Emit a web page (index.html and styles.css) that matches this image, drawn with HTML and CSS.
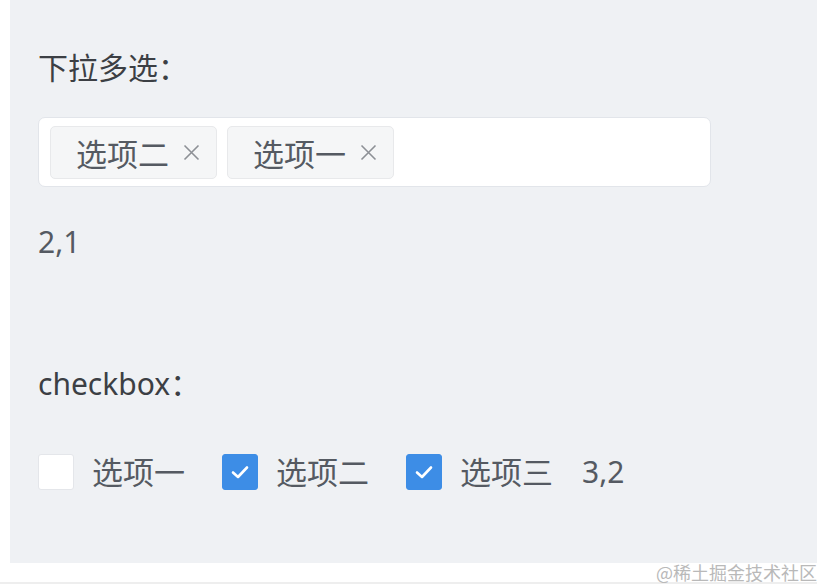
FILE: index.html
```html
<!DOCTYPE html>
<html lang="zh">
<head>
  <meta charset="UTF-8">
  <meta name="viewport" content="width=device-width, initial-scale=1.0">
  <title>下拉多选</title>
  <link rel="stylesheet" href="styles.css">
</head>
<body>

  <div class="panel">
    <div class="titulo">下拉多选：</div>
    <div class="select">
      <span class="tag">选项二<svg class="tag-close" width="17" height="17" viewBox="0 0 17 17"><path d="M1.5 1.5 L15.5 15.5 M15.5 1.5 L1.5 15.5" stroke="#8d9096" stroke-width="1.6" fill="none"/></svg></span>
      <span class="tag">选项一<svg class="tag-close" width="17" height="17" viewBox="0 0 17 17"><path d="M1.5 1.5 L15.5 15.5 M15.5 1.5 L1.5 15.5" stroke="#8d9096" stroke-width="1.6" fill="none"/></svg></span>
    </div>
    <div class="valor">2,1</div>

    <div class="titulo checkbox-titulo">checkbox：</div>
    <div class="checks">
      <label class="check"><span class="box"></span>选项一</label>
      <label class="check"><span class="box marcado"><svg width="24" height="24" viewBox="0 0 24 24"><path d="M5 12.5 L10 17 L19 7.5" fill="none" stroke="#fff" stroke-width="2.6" stroke-linecap="round" stroke-linejoin="round"/></svg></span>选项二</label>
      <label class="check"><span class="box marcado"><svg width="24" height="24" viewBox="0 0 24 24"><path d="M5 12.5 L10 17 L19 7.5" fill="none" stroke="#fff" stroke-width="2.6" stroke-linecap="round" stroke-linejoin="round"/></svg></span>选项三</label>
      <span class="valor-check">3,2</span>
    </div>
  </div>

  <div class="pie">@稀土掘金技术社区</div>

</body>
</html>
```

FILE: styles.css
```css
/* pagina */
body {
  font-family: "Noto Sans", "Noto Sans CJK SC", sans-serif;
  background-color: #fff;
  color: #555a62;
  margin: 0;
  padding: 0;
}

.panel {
  margin-left: 10px;
  width: 807px;
  height: 563px;
  box-sizing: border-box;
  background-color: #eff1f4;
  padding: 48px 0 0 28px;
}

.titulo {
  font-size: 30px;
  line-height: 40px;
  color: #3c3f44;
}

.select {
  margin-top: 29px;
  width: 673px;
  height: 70px;
  box-sizing: border-box;
  background-color: #fff;
  border: 1px solid #e2e5ea;
  border-radius: 7px;
  padding: 8px 11px;
  display: flex;
  gap: 10px;
}

.tag {
  display: inline-flex;
  align-items: center;
  height: 53px;
  box-sizing: border-box;
  padding: 0 16px 0 25px;
  background-color: #f5f6f7;
  border: 1px solid #e8e9eb;
  border-radius: 5px;
  font-size: 31px;
  color: #555a62;
}

.tag-close {
  margin-left: 14px;
}

.valor {
  margin-top: 35px;
  font-size: 30px;
  line-height: 40px;
}

.checkbox-titulo {
  margin-top: 102px;
}

.checks {
  margin-top: 50px;
  display: flex;
  align-items: center;
  font-size: 31px;
  line-height: 36px;
}

.check {
  display: flex;
  align-items: center;
  margin-right: 37px;
}

.box {
  width: 36px;
  height: 36px;
  box-sizing: border-box;
  background-color: #fff;
  border: 1px solid #e4e6ea;
  border-radius: 3px;
  margin-right: 18px;
  display: flex;
  align-items: center;
  justify-content: center;
}

.marcado {
  background-color: #3d8de6;
  border-color: #3d8de6;
}

.valor-check {
  margin-left: -8px;
  font-size: 30px;
}

.pie {
  width: 817px;
  height: 19px;
  border-bottom: 2px solid #eeeeee;
  text-align: right;
  font-family: "Noto Sans CJK SC", serif;
  font-size: 18px;
  line-height: 19px;
  color: #b9b9b9;
}
```
